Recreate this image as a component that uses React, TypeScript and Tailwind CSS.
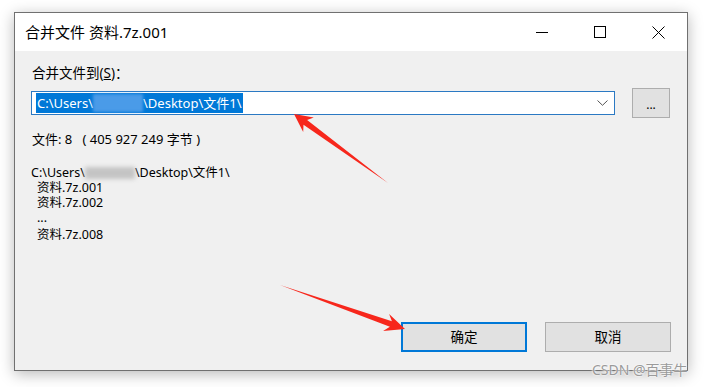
export default function App() {
  const font = { fontFamily: '"Noto Sans","Noto Sans CJK SC",sans-serif' };
  return (
    <div className="relative w-[707px] h-[387px] bg-white overflow-hidden pl-[14px] pt-[12px]" style={font}>
      <div className="w-[674px] h-[359px] border border-[#707070] bg-[#f0f0f0] flex flex-col shadow-[0_3px_14px_rgba(0,0,0,0.28)]">
        {/* title bar */}
        <div className="h-[38px] bg-white flex items-center shrink-0">
          <div className="flex-1 pl-[10px] text-[15px] text-black">合并文件 资料.7z.001</div>
          <div className="flex h-full">
            <div className="w-[58px] flex items-center justify-center">
              <div className="w-[12px] h-px bg-black" />
            </div>
            <div className="w-[58px] flex items-center justify-center">
              <div className="w-[12px] h-[12px] border border-black" />
            </div>
            <div className="w-[58px] flex items-center justify-center">
              <svg width="13" height="13" viewBox="0 0 13 13">
                <path d="M0.5 0.5L12.5 12.5M12.5 0.5L0.5 12.5" stroke="#000" strokeWidth="1" />
              </svg>
            </div>
          </div>
        </div>

        {/* body */}
        <div className="flex-1 flex flex-col px-[16px] pt-[14px] pb-[18px] text-black">
          <div className="pl-[1px] text-[13.5px] leading-[16px]">
            合并文件到(<span className="underline">S</span>)：
          </div>
          <div className="mt-[7px] flex items-center gap-[17px]">
            <div className="w-[584px] h-[24px] bg-white border border-[#2b79c3] flex items-center pl-[4px] pr-[6px]">
              <div className="flex items-center h-[20px] bg-[#0078d7] text-white text-[13px] leading-[20px] px-[1px]">
                <span>C:\Users\</span>
                <span className="w-[50px] h-[18px] bg-[#4a9be8] blur-[1.5px]" />
                <span>\Desktop\文件1\</span>
              </div>
              <div className="flex-1" />
              <svg width="11" height="6" viewBox="0 0 11 6">
                <path d="M0.5 0.5L5.5 5.3L10.5 0.5" stroke="#555" strokeWidth="1" fill="none" />
              </svg>
            </div>
            <div className="w-[38px] h-[30px] bg-[#e1e1e1] border border-[#adadad] flex items-center justify-center text-[12px] leading-none pt-[4px]">
              ...
            </div>
          </div>

          <div className="mt-[13px] pl-[1px] text-[13px] leading-[16px] whitespace-pre">文件: 8   ( 405 927 249 字节 )</div>

          <div className="mt-[18px] text-[12.5px] leading-[15px]">
            <div className="flex items-center">
              <span>C:\Users\</span>
              <span className="w-[50px] h-[12px] bg-[#c4c4c4] blur-[2px]" />
              <span>\Desktop\文件1\</span>
            </div>
            <div className="pl-[6px]">资料.7z.001</div>
            <div className="pl-[6px]">资料.7z.002</div>
            <div className="pl-[6px] h-[17px] leading-[15px]">...</div>
            <div className="pl-[6px]">资料.7z.008</div>
          </div>

          <div className="flex-1" />
          <div className="flex justify-end gap-[18px]">
            <div className="w-[126px] h-[30px] bg-[#e1e1e1] border-2 border-[#0078d7] flex items-center justify-center text-[13.5px]">
              确定
            </div>
            <div className="w-[126px] h-[30px] bg-[#e1e1e1] border border-[#adadad] flex items-center justify-center text-[13.5px]">
              取消
            </div>
          </div>
        </div>
      </div>

      {/* annotation arrows */}
      <svg className="absolute left-0 top-0 pointer-events-none" width="707" height="387" viewBox="0 0 707 387">
        <polygon
          points="388,183 307.1,119.9 313.8,117.4 294,114 303.2,132 303.5,124.7"
          fill="#f7271c"
        />
        <polygon
          points="280,285 391.9,321.2 389.1,313.9 405,329 383.1,330.9 389.9,326.8"
          fill="#f7271c"
        />
      </svg>

      <div className="absolute left-[592px] top-[361px] text-[14px] leading-[18px] text-[#9a9a9a] [text-shadow:0_0_2px_#fff,0_0_2px_#fff]">
        CSDN @百事牛
      </div>
    </div>
  );
}
